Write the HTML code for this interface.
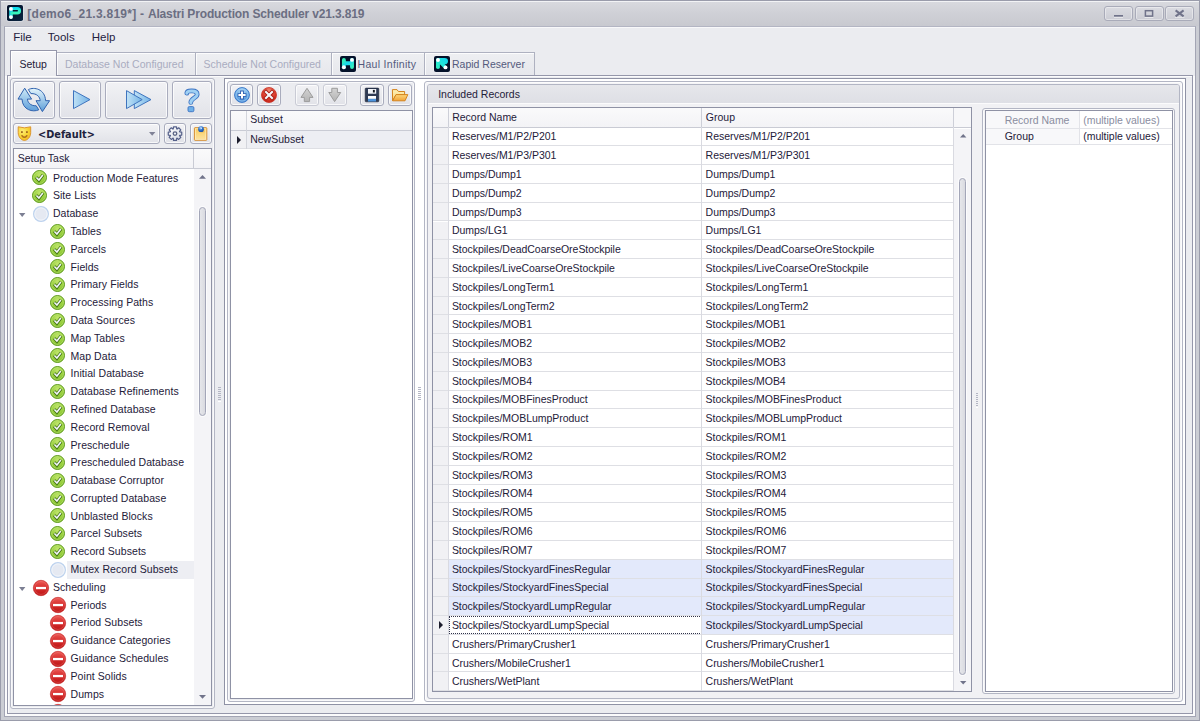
<!DOCTYPE html>
<html lang="en"><head><meta charset="utf-8"><title>Alastri Production Scheduler</title>
<style>
*{box-sizing:border-box;margin:0;padding:0}
html,body{width:1200px;height:721px;overflow:hidden;background:#ebecf0}
body{font-family:"Liberation Sans",sans-serif;font-size:10.5px;color:#1e2039;position:relative;-webkit-font-smoothing:antialiased}
.a{position:absolute}
.t{position:absolute;white-space:pre;line-height:1}
svg{position:absolute;overflow:visible}
.btn{position:absolute;border:1px solid #a9acbd;border-radius:3px;background:linear-gradient(#f2f2f5,#eaebef 45%,#e1e2e8);box-shadow:inset 0 0 0 1px rgba(255,255,255,.75)}
.btn.dis{border-color:#c9cbd5}
.grp{position:absolute;border:1px solid #b3b6c4;border-radius:3px;background:#ebecf0;box-shadow:inset 0 0 0 1px rgba(255,255,255,.7)}
.grid{position:absolute;border:1px solid #8f92a5;background:#fff}
.hdr{position:absolute;background:linear-gradient(#fafafb,#f3f3f6);border-bottom:1px solid #c9cbd4}
.row{position:absolute;left:0;border-bottom:1px solid #dedfe4}
.tr{position:absolute;left:0;height:17.79px;line-height:17.79px;white-space:pre}
.tab{position:absolute;top:52.3px;height:22.7px;border:1px solid #aeb1c0;border-bottom:none;background:linear-gradient(#eeeff2,#e6e7ec);box-shadow:inset 1px 1px 0 rgba(255,255,255,.8)}
</style></head>
<body>
<div class="a" style="left:0;top:0;width:1200px;height:721px;background:#cbcdd4;border:1px solid #9a9cab"></div>
<div class="a" style="left:1px;top:1px;width:1198px;height:25px;background:linear-gradient(#d9dadf,#d0d1d7 45%,#c8c9d0)"></div>
<div class="a" style="left:1px;top:1px;width:1198px;height:1px;background:#f2f3f5"></div>
<div class="a" style="left:4px;top:26px;width:1192px;height:691px;background:#ebecf0;border:1px solid #a3a5b4;border-top-color:#b3b5c3"></div>
<div class="a" style="left:5px;top:27px;width:1190px;height:1px;background:#f8f8fa"></div>
<svg style="left:7px;top:5px" width="16" height="16" viewBox="0 0 16 16"><defs><linearGradient id="g1" x1="0" y1="0" x2="0.3" y2="1"><stop offset="0" stop-color="#10dcf4"/><stop offset="1" stop-color="#38f6bc"/></linearGradient>
<linearGradient id="g1b" x1="0" y1="0" x2="1" y2="1"><stop offset="0" stop-color="#030e26"/><stop offset="1" stop-color="#0b2542"/></linearGradient></defs>
<rect x="-0.6" y="-0.6" width="17.2" height="17.2" rx="2.2" fill="#eef0f5" opacity=".75"/>
<rect width="16" height="16" rx="1.8" fill="url(#g1b)"/>
<path d="M4 3.9V12.1" stroke="#20d8e4" stroke-width="3.6" stroke-linecap="round" fill="none"/>
<path d="M4 3.5H10.3a2.25 2.25 0 0 1 0 4.5H5" stroke="url(#g1)" stroke-width="3" stroke-linecap="round" fill="none"/>
<circle cx="3.95" cy="3.9" r="1.95" fill="#fff"/><circle cx="3.95" cy="12.1" r="1.95" fill="#fff"/></svg>
<div class="t" style="left:27.3px;top:7.84px;font-size:12px;font-weight:bold;color:#6b6e82"><span style="letter-spacing:.26px">[demo6_21.3.819*] - </span><span style="letter-spacing:-.15px">Alastri Production Scheduler v21.3.819</span></div>
<div class="a" style="left:1104px;top:6px;width:29px;height:15px;border:1px solid #a9abb9;border-radius:3px;background:linear-gradient(#dadbe1,#cbccd4);box-shadow:inset 0 0 0 1px rgba(255,255,255,.4)"></div>
<div class="a" style="left:1135px;top:6px;width:29px;height:15px;border:1px solid #a9abb9;border-radius:3px;background:linear-gradient(#dadbe1,#cbccd4);box-shadow:inset 0 0 0 1px rgba(255,255,255,.4)"></div>
<div class="a" style="left:1165px;top:6px;width:29px;height:15px;border:1px solid #a9abb9;border-radius:3px;background:linear-gradient(#dadbe1,#cbccd4);box-shadow:inset 0 0 0 1px rgba(255,255,255,.4)"></div>
<svg style="left:0;top:0" width="1200" height="26" viewBox="0 0 1200 26"><rect x="1114" y="15" width="9" height="1.7" fill="#70738a"/><rect x="1114" y="16.9" width="9" height="0.9" fill="#fff" opacity=".6"/>
<rect x="1145.4" y="10.7" width="7.2" height="5.4" fill="none" stroke="#70738a" stroke-width="1.5"/><rect x="1144.6" y="17" width="8.8" height="0.9" fill="#fff" opacity=".6"/>
<path d="M1175.6 10.4L1183.6 16.4M1183.6 10.4L1175.6 16.4" stroke="#70738a" stroke-width="2" fill="none"/><rect x="1175" y="17" width="9.4" height="0.9" fill="#fff" opacity=".5"/></svg>
<div class="t" style="left:13.2px;top:32.27px;font-size:11.5px;color:#1f2140">File</div>
<div class="t" style="left:47.8px;top:32.27px;font-size:11.5px;color:#1f2140">Tools</div>
<div class="t" style="left:91.8px;top:32.27px;font-size:11.5px;color:#1f2140">Help</div>
<div class="a" style="left:7px;top:75px;width:1186px;height:639px;border:1px solid #9597aa;background:#ebecf0;box-shadow:inset 1px 1px 0 #fbfbfc"></div>
<div class="a" style="left:5px;top:76px;width:2px;height:640px;background:#fbfbfc"></div>
<div class="a" style="left:1193px;top:76px;width:2px;height:640px;background:#fbfbfc"></div>
<div class="a" style="left:5px;top:714px;width:1190px;height:2px;background:#fbfbfc"></div>
<div class="tab" style="left:56px;width:139.5px"></div>
<div class="t" style="left:65px;top:59.11px;color:#a9acbf">Database Not Configured</div>
<div class="tab" style="left:195px;width:136.5px"></div>
<div class="t" style="left:203.6px;top:59.11px;color:#a9acbf">Schedule Not Configured</div>
<div class="tab" style="left:331px;width:94.5px"></div>
<div class="t" style="left:357.6px;top:59.11px;color:#545a7c;letter-spacing:.3px">Haul Infinity</div>
<div class="tab" style="left:424px;width:111px"></div>
<div class="t" style="left:452px;top:59.11px;color:#545a7c">Rapid Reserver</div>
<svg style="left:339.5px;top:56.3px" width="16" height="16" viewBox="0 0 16 16"><defs><linearGradient id="g2" x1="0" y1="0" x2="1" y2="1"><stop offset="0" stop-color="#34f2b6"/><stop offset=".45" stop-color="#16d8f2"/><stop offset="1" stop-color="#36f0bc"/></linearGradient></defs>
<rect x="-0.6" y="-0.6" width="17.2" height="17.2" rx="2.4" fill="#f4f5f8" opacity=".7"/>
<rect width="16" height="16" rx="2" fill="#04112a"/>
<path d="M3.9 3.9V11.3M12 3.9V11.1M3.9 7.3H12" stroke="url(#g2)" stroke-width="3.9" stroke-linecap="round" fill="none"/>
<circle cx="12" cy="3.9" r="1.9" fill="#fff"/><circle cx="3.85" cy="11.3" r="1.95" fill="#fff"/></svg>
<svg style="left:433.7px;top:56.3px" width="16" height="16" viewBox="0 0 16 16"><defs><linearGradient id="g3" x1="1" y1="0" x2="0" y2="1"><stop offset="0" stop-color="#0fd4f2"/><stop offset=".55" stop-color="#22e6d8"/><stop offset="1" stop-color="#36f4bc"/></linearGradient></defs>
<rect x="-0.6" y="-0.6" width="17.2" height="17.2" rx="2.4" fill="#f4f5f8" opacity=".7"/>
<rect width="16" height="16" rx="2" fill="#04112a"/>
<path d="M2 3.6Q2 2 3.6 2H10.5Q14 2 14 5.2Q14 8.3 10.6 8.3L12.8 10.6L10.4 12.8L5.9 8.3V11.6Q5.9 13 4 13Q2 13 2 11.6Z" fill="url(#g3)"/>
<circle cx="4" cy="4" r="1.95" fill="#fff"/><circle cx="11.5" cy="11.4" r="1.95" fill="#fff"/></svg>
<div class="a" style="left:10px;top:50.2px;width:47.3px;height:26.3px;border:1px solid #9597aa;border-bottom:none;background:linear-gradient(#f6f6f8,#ebecf0);box-shadow:inset 1px 1px 0 #fff"></div>
<div class="a" style="left:8px;top:75px;width:3px;height:1px;background:#9597aa"></div>
<div class="t" style="left:19.4px;top:59.11px;">Setup</div>
<div class="grp" style="left:10px;top:78px;width:205px;height:631px"></div>
<div class="btn" style="left:13.1px;top:81px;width:41.8px;height:38px"></div>
<div class="btn" style="left:59.1px;top:81px;width:41.6px;height:38px"></div>
<div class="btn" style="left:105.2px;top:81px;width:62.7px;height:38px"></div>
<div class="btn" style="left:172px;top:81px;width:40.1px;height:38px"></div>
<svg style="left:14px;top:84px" width="40" height="32" viewBox="0 0 40 32"><defs><linearGradient id="g4" x1="0" y1="0" x2="0" y2="1"><stop offset="0" stop-color="#cfeaf8"/><stop offset="1" stop-color="#5f9fda"/></linearGradient><linearGradient id="g5" x1="0" y1="0" x2="0" y2="1"><stop offset="0" stop-color="#e4f5fc"/><stop offset="1" stop-color="#5c9ed8"/></linearGradient></defs>
<path d="M10.7 4.2L17.6 15.1H13.4C13.7 18.2 16.2 22 22.2 21.8L24.8 25.8C19 28.6 8.4 26 8 15.1H4Z" fill="url(#g4)" stroke="#2f62ae" stroke-width="1" stroke-linejoin="round"/>
<path d="M28.4 27.6L22 16.7H26.2C26 13 23 9.3 16.9 9.6L14.4 5.6C20 2.6 31 5 31.6 16.7H35.6Z" fill="url(#g5)" stroke="#2f62ae" stroke-width="1" stroke-linejoin="round"/></svg>
<svg style="left:72.7px;top:89.8px" width="18" height="20" viewBox="0 0 18 20"><defs><linearGradient id="g6" x1="0" y1="0" x2="1" y2="0"><stop offset="0" stop-color="#bfe1f5"/><stop offset="1" stop-color="#72b2e6"/></linearGradient></defs>
<path d="M0.5 0.6L17 9.6L0.5 18.6Z" fill="url(#g6)" stroke="#3f74be" stroke-width="1" stroke-linejoin="round"/></svg>
<svg style="left:125.6px;top:89.7px" width="26" height="20" viewBox="0 0 26 20"><defs><linearGradient id="g7" x1="0" y1="0" x2="1" y2="0"><stop offset="0" stop-color="#c2e3f6"/><stop offset="1" stop-color="#74b4e7"/></linearGradient></defs>
<path d="M8.3 0.6L25 9.6L8.3 18.6Z" fill="url(#g7)" stroke="#3f74be" stroke-width="1" stroke-linejoin="round"/>
<path d="M0.5 0.6L16.2 9.6L0.5 18.6Z" fill="url(#g7)" stroke="#3f74be" stroke-width="1" stroke-linejoin="round"/></svg>
<svg style="left:176px;top:84px" width="32" height="32" viewBox="0 0 32 32"><defs><linearGradient id="g8" x1="0" y1="0" x2="0" y2="1"><stop offset="0" stop-color="#bfe4f9"/><stop offset="1" stop-color="#69ade6"/></linearGradient></defs>
<path d="M10.8 9.2C11 6.6 13.6 6.9 16 6.9C19.5 6.9 21.2 8.4 21.2 10.4C21.2 13.6 14.8 14.4 14.8 18.4" fill="none" stroke="#3b72c2" stroke-width="4.7" stroke-linecap="round"/>
<path d="M10.8 9.2C11 6.6 13.6 6.9 16 6.9C19.5 6.9 21.2 8.4 21.2 10.4C21.2 13.6 14.8 14.4 14.8 18.4" fill="none" stroke="#9fd0f3" stroke-width="3" stroke-linecap="round"/>
<rect x="12" y="22.6" width="5.9" height="5.1" rx="1.3" fill="#6fb0e8" stroke="#3b72c2" stroke-width=".9"/></svg>
<div class="btn" style="left:13px;top:123px;width:147px;height:21px"></div>
<svg style="left:14px;top:122px" width="24" height="24" viewBox="0 0 24 24"><defs><radialGradient id="g9" cx=".35" cy=".3" r=".8"><stop offset="0" stop-color="#fdec78"/><stop offset=".6" stop-color="#f8d22e"/><stop offset="1" stop-color="#f0b028"/></radialGradient></defs>
<path d="M4.2 4.8Q10.4 6.9 16.7 4.8V10.6C16.7 15 13.6 18.2 10.45 18.5C7.3 18.2 4.2 15 4.2 10.6Z" fill="url(#g9)" stroke="#dc962e" stroke-width="1"/>
<rect x="7" y="9.2" width="1.8" height="1.8" fill="#a46c1e"/><rect x="12" y="9.2" width="1.8" height="1.8" fill="#a46c1e"/>
<path d="M8 13.7Q10.4 17 12.8 13.7" fill="none" stroke="#b0701e" stroke-width="1.5" stroke-linecap="round"/></svg>
<div class="t" style="left:38px;top:129.75px;font-size:9.75px;font-family:'DejaVu Sans','Liberation Sans',sans-serif;font-weight:bold;color:#20223c">&lt;Default&gt;</div>
<svg style="left:148.7px;top:131.7px" width="7" height="4"><path d="M0 0H6.4L3.2 3.8Z" fill="#7f8296"/></svg>
<div class="btn" style="left:164px;top:123px;width:22px;height:21px"></div>
<div class="btn" style="left:190px;top:123px;width:22px;height:21px"></div>
<svg style="left:162px;top:121px" width="26" height="26" viewBox="0 0 26 26"><defs><linearGradient id="g10" x1="0" y1="0" x2="1" y2="1"><stop offset="0" stop-color="#ffffff"/><stop offset="1" stop-color="#d3d8e2"/></linearGradient></defs>
<path d="M19.73 11.09L19.73 14.11L17.70 14.31L17.53 14.71L18.83 16.30L16.70 18.43L15.11 17.13L14.71 17.30L14.51 19.33L11.49 19.33L11.29 17.30L10.89 17.13L9.30 18.43L7.17 16.30L8.47 14.71L8.30 14.31L6.27 14.11L6.27 11.09L8.30 10.89L8.47 10.49L7.17 8.90L9.30 6.77L10.89 8.07L11.29 7.90L11.49 5.87L14.51 5.87L14.71 7.90L15.11 8.07L16.70 6.77L18.83 8.90L17.53 10.49L17.70 10.89Z" fill="url(#g10)" stroke="#55608a" stroke-width="1.2" stroke-linejoin="round"/>
<circle cx="13.0" cy="12.599999999999994" r="1.8" fill="#eef0f5" stroke="#5a6484" stroke-width="1.3"/></svg>
<svg style="left:162px;top:121px" width="52" height="26" viewBox="0 0 52 26"><defs><linearGradient id="g11" x1="0" y1="0" x2="0" y2="1"><stop offset="0" stop-color="#f9cb5e"/><stop offset="1" stop-color="#fce4a2"/></linearGradient>
<radialGradient id="g12" cx=".4" cy=".3" r=".7"><stop offset="0" stop-color="#9fcaf5"/><stop offset=".5" stop-color="#2f74cf"/><stop offset="1" stop-color="#1a4fa6"/></radialGradient></defs>
<rect x="32.4" y="6.7" width="12.4" height="12.6" rx=".6" fill="url(#g11)" stroke="#d68e34" stroke-width="1"/>
<rect x="33.4" y="7.7" width="10.4" height="10.6" fill="none" stroke="#fff3cc" stroke-width=".7" opacity=".8"/>
<ellipse cx="40" cy="10.6" rx="2.6" ry="1" fill="#c8902e" opacity=".35"/>
<circle cx="39" cy="8.2" r="2.85" fill="url(#g12)"/><path d="M38.4 6.6L40.4 6.8L39.2 8.2Z" fill="#fff" opacity=".9"/></svg>
<div class="grid" style="left:13px;top:148px;width:199px;height:558px;overflow:hidden">
<div class="hdr" style="left:0;top:0;width:197px;height:19.5px"></div>
<div class="a" style="left:178.6px;top:0;width:1px;height:19px;background:#c9cbd4"></div>
<div class="t" style="left:3.7px;top:4.11px;">Setup Task</div>
<div class="a" style="left:179.6px;top:19.5px;width:17.4px;height:537px;background:#f4f4f7"></div>
<svg style="left:185.3px;top:26.2px" width="8" height="5"><path d="M0 3.8H7L3.5 0Z" fill="#70738a"/></svg>
<svg style="left:185.3px;top:545.6px" width="8" height="5"><path d="M0 0H7L3.5 3.8Z" fill="#70738a"/></svg>
<div class="a" style="left:185px;top:58.3px;width:7px;height:209px;border:1px solid #a3a6b8;border-radius:3.6px;background:linear-gradient(90deg,#e6e7eb,#d9dae0);box-shadow:0 0 0 1px rgba(255,255,255,.7)"></div>
<svg style="left:18.45px;top:21.39px" width="15" height="15" viewBox="0 0 15 15"><defs><radialGradient id="g13" cx=".5" cy=".3" r=".75"><stop offset="0" stop-color="#bfe56c"/><stop offset=".6" stop-color="#97cf3c"/><stop offset="1" stop-color="#7ab828"/></radialGradient></defs>
<circle cx="7.5" cy="7.5" r="7" fill="url(#g13)" stroke="#609c1e" stroke-width="1"/>
<circle cx="7.5" cy="7.5" r="5.9" fill="none" stroke="#c4e880" stroke-width=".7" opacity=".7"/>
<path d="M4.2 7.3L6.9 10.3L11 4.9" fill="none" stroke="#417212" stroke-width="3.2" stroke-linejoin="miter"/>
<path d="M4.4 7.5L6.9 10.1L10.8 5.1" fill="none" stroke="#f2f5fa" stroke-width="1.6"/></svg>
<div class="t" style="left:38.9px;top:24.11px;letter-spacing:.07px">Production Mode Features</div>
<svg style="left:18.45px;top:39.18px" width="15" height="15" viewBox="0 0 15 15"><defs><radialGradient id="g14" cx=".5" cy=".3" r=".75"><stop offset="0" stop-color="#bfe56c"/><stop offset=".6" stop-color="#97cf3c"/><stop offset="1" stop-color="#7ab828"/></radialGradient></defs>
<circle cx="7.5" cy="7.5" r="7" fill="url(#g14)" stroke="#609c1e" stroke-width="1"/>
<circle cx="7.5" cy="7.5" r="5.9" fill="none" stroke="#c4e880" stroke-width=".7" opacity=".7"/>
<path d="M4.2 7.3L6.9 10.3L11 4.9" fill="none" stroke="#417212" stroke-width="3.2" stroke-linejoin="miter"/>
<path d="M4.4 7.5L6.9 10.1L10.8 5.1" fill="none" stroke="#f2f5fa" stroke-width="1.6"/></svg>
<div class="t" style="left:38.9px;top:41.11px;letter-spacing:.07px">Site Lists</div>
<svg style="left:5.2px;top:64.28px" width="7" height="4"><path d="M0 0H6.4L3.2 3.9Z" fill="#7c7f93"/></svg>
<svg style="left:19.00px;top:56.97px" width="16" height="16" viewBox="0 0 16 16"><circle cx="8" cy="8" r="7.4" fill="#e5e9f2" stroke="#bcd2ee" stroke-width="1.2"/>
<circle cx="8" cy="8" r="6.1" fill="none" stroke="#f2f5fa" stroke-width=".9"/></svg>
<div class="t" style="left:38.9px;top:59.11px;letter-spacing:.07px">Database</div>
<svg style="left:36.05px;top:74.76px" width="15" height="15" viewBox="0 0 15 15"><defs><radialGradient id="g15" cx=".5" cy=".3" r=".75"><stop offset="0" stop-color="#bfe56c"/><stop offset=".6" stop-color="#97cf3c"/><stop offset="1" stop-color="#7ab828"/></radialGradient></defs>
<circle cx="7.5" cy="7.5" r="7" fill="url(#g15)" stroke="#609c1e" stroke-width="1"/>
<circle cx="7.5" cy="7.5" r="5.9" fill="none" stroke="#c4e880" stroke-width=".7" opacity=".7"/>
<path d="M4.2 7.3L6.9 10.3L11 4.9" fill="none" stroke="#417212" stroke-width="3.2" stroke-linejoin="miter"/>
<path d="M4.4 7.5L6.9 10.1L10.8 5.1" fill="none" stroke="#f2f5fa" stroke-width="1.6"/></svg>
<div class="t" style="left:56.5px;top:77.11px;letter-spacing:.07px">Tables</div>
<svg style="left:36.05px;top:92.55px" width="15" height="15" viewBox="0 0 15 15"><defs><radialGradient id="g16" cx=".5" cy=".3" r=".75"><stop offset="0" stop-color="#bfe56c"/><stop offset=".6" stop-color="#97cf3c"/><stop offset="1" stop-color="#7ab828"/></radialGradient></defs>
<circle cx="7.5" cy="7.5" r="7" fill="url(#g16)" stroke="#609c1e" stroke-width="1"/>
<circle cx="7.5" cy="7.5" r="5.9" fill="none" stroke="#c4e880" stroke-width=".7" opacity=".7"/>
<path d="M4.2 7.3L6.9 10.3L11 4.9" fill="none" stroke="#417212" stroke-width="3.2" stroke-linejoin="miter"/>
<path d="M4.4 7.5L6.9 10.1L10.8 5.1" fill="none" stroke="#f2f5fa" stroke-width="1.6"/></svg>
<div class="t" style="left:56.5px;top:95.11px;letter-spacing:.07px">Parcels</div>
<svg style="left:36.05px;top:110.34px" width="15" height="15" viewBox="0 0 15 15"><defs><radialGradient id="g17" cx=".5" cy=".3" r=".75"><stop offset="0" stop-color="#bfe56c"/><stop offset=".6" stop-color="#97cf3c"/><stop offset="1" stop-color="#7ab828"/></radialGradient></defs>
<circle cx="7.5" cy="7.5" r="7" fill="url(#g17)" stroke="#609c1e" stroke-width="1"/>
<circle cx="7.5" cy="7.5" r="5.9" fill="none" stroke="#c4e880" stroke-width=".7" opacity=".7"/>
<path d="M4.2 7.3L6.9 10.3L11 4.9" fill="none" stroke="#417212" stroke-width="3.2" stroke-linejoin="miter"/>
<path d="M4.4 7.5L6.9 10.1L10.8 5.1" fill="none" stroke="#f2f5fa" stroke-width="1.6"/></svg>
<div class="t" style="left:56.5px;top:113.11px;letter-spacing:.07px">Fields</div>
<svg style="left:36.05px;top:128.14px" width="15" height="15" viewBox="0 0 15 15"><defs><radialGradient id="g18" cx=".5" cy=".3" r=".75"><stop offset="0" stop-color="#bfe56c"/><stop offset=".6" stop-color="#97cf3c"/><stop offset="1" stop-color="#7ab828"/></radialGradient></defs>
<circle cx="7.5" cy="7.5" r="7" fill="url(#g18)" stroke="#609c1e" stroke-width="1"/>
<circle cx="7.5" cy="7.5" r="5.9" fill="none" stroke="#c4e880" stroke-width=".7" opacity=".7"/>
<path d="M4.2 7.3L6.9 10.3L11 4.9" fill="none" stroke="#417212" stroke-width="3.2" stroke-linejoin="miter"/>
<path d="M4.4 7.5L6.9 10.1L10.8 5.1" fill="none" stroke="#f2f5fa" stroke-width="1.6"/></svg>
<div class="t" style="left:56.5px;top:130.11px;letter-spacing:.07px">Primary Fields</div>
<svg style="left:36.05px;top:145.93px" width="15" height="15" viewBox="0 0 15 15"><defs><radialGradient id="g19" cx=".5" cy=".3" r=".75"><stop offset="0" stop-color="#bfe56c"/><stop offset=".6" stop-color="#97cf3c"/><stop offset="1" stop-color="#7ab828"/></radialGradient></defs>
<circle cx="7.5" cy="7.5" r="7" fill="url(#g19)" stroke="#609c1e" stroke-width="1"/>
<circle cx="7.5" cy="7.5" r="5.9" fill="none" stroke="#c4e880" stroke-width=".7" opacity=".7"/>
<path d="M4.2 7.3L6.9 10.3L11 4.9" fill="none" stroke="#417212" stroke-width="3.2" stroke-linejoin="miter"/>
<path d="M4.4 7.5L6.9 10.1L10.8 5.1" fill="none" stroke="#f2f5fa" stroke-width="1.6"/></svg>
<div class="t" style="left:56.5px;top:148.11px;letter-spacing:.07px">Processing Paths</div>
<svg style="left:36.05px;top:163.72px" width="15" height="15" viewBox="0 0 15 15"><defs><radialGradient id="g20" cx=".5" cy=".3" r=".75"><stop offset="0" stop-color="#bfe56c"/><stop offset=".6" stop-color="#97cf3c"/><stop offset="1" stop-color="#7ab828"/></radialGradient></defs>
<circle cx="7.5" cy="7.5" r="7" fill="url(#g20)" stroke="#609c1e" stroke-width="1"/>
<circle cx="7.5" cy="7.5" r="5.9" fill="none" stroke="#c4e880" stroke-width=".7" opacity=".7"/>
<path d="M4.2 7.3L6.9 10.3L11 4.9" fill="none" stroke="#417212" stroke-width="3.2" stroke-linejoin="miter"/>
<path d="M4.4 7.5L6.9 10.1L10.8 5.1" fill="none" stroke="#f2f5fa" stroke-width="1.6"/></svg>
<div class="t" style="left:56.5px;top:166.11px;letter-spacing:.07px">Data Sources</div>
<svg style="left:36.05px;top:181.50px" width="15" height="15" viewBox="0 0 15 15"><defs><radialGradient id="g21" cx=".5" cy=".3" r=".75"><stop offset="0" stop-color="#bfe56c"/><stop offset=".6" stop-color="#97cf3c"/><stop offset="1" stop-color="#7ab828"/></radialGradient></defs>
<circle cx="7.5" cy="7.5" r="7" fill="url(#g21)" stroke="#609c1e" stroke-width="1"/>
<circle cx="7.5" cy="7.5" r="5.9" fill="none" stroke="#c4e880" stroke-width=".7" opacity=".7"/>
<path d="M4.2 7.3L6.9 10.3L11 4.9" fill="none" stroke="#417212" stroke-width="3.2" stroke-linejoin="miter"/>
<path d="M4.4 7.5L6.9 10.1L10.8 5.1" fill="none" stroke="#f2f5fa" stroke-width="1.6"/></svg>
<div class="t" style="left:56.5px;top:184.11px;letter-spacing:.07px">Map Tables</div>
<svg style="left:36.05px;top:199.29px" width="15" height="15" viewBox="0 0 15 15"><defs><radialGradient id="g22" cx=".5" cy=".3" r=".75"><stop offset="0" stop-color="#bfe56c"/><stop offset=".6" stop-color="#97cf3c"/><stop offset="1" stop-color="#7ab828"/></radialGradient></defs>
<circle cx="7.5" cy="7.5" r="7" fill="url(#g22)" stroke="#609c1e" stroke-width="1"/>
<circle cx="7.5" cy="7.5" r="5.9" fill="none" stroke="#c4e880" stroke-width=".7" opacity=".7"/>
<path d="M4.2 7.3L6.9 10.3L11 4.9" fill="none" stroke="#417212" stroke-width="3.2" stroke-linejoin="miter"/>
<path d="M4.4 7.5L6.9 10.1L10.8 5.1" fill="none" stroke="#f2f5fa" stroke-width="1.6"/></svg>
<div class="t" style="left:56.5px;top:202.11px;letter-spacing:.07px">Map Data</div>
<svg style="left:36.05px;top:217.09px" width="15" height="15" viewBox="0 0 15 15"><defs><radialGradient id="g23" cx=".5" cy=".3" r=".75"><stop offset="0" stop-color="#bfe56c"/><stop offset=".6" stop-color="#97cf3c"/><stop offset="1" stop-color="#7ab828"/></radialGradient></defs>
<circle cx="7.5" cy="7.5" r="7" fill="url(#g23)" stroke="#609c1e" stroke-width="1"/>
<circle cx="7.5" cy="7.5" r="5.9" fill="none" stroke="#c4e880" stroke-width=".7" opacity=".7"/>
<path d="M4.2 7.3L6.9 10.3L11 4.9" fill="none" stroke="#417212" stroke-width="3.2" stroke-linejoin="miter"/>
<path d="M4.4 7.5L6.9 10.1L10.8 5.1" fill="none" stroke="#f2f5fa" stroke-width="1.6"/></svg>
<div class="t" style="left:56.5px;top:219.11px;letter-spacing:.07px">Initial Database</div>
<svg style="left:36.05px;top:234.88px" width="15" height="15" viewBox="0 0 15 15"><defs><radialGradient id="g24" cx=".5" cy=".3" r=".75"><stop offset="0" stop-color="#bfe56c"/><stop offset=".6" stop-color="#97cf3c"/><stop offset="1" stop-color="#7ab828"/></radialGradient></defs>
<circle cx="7.5" cy="7.5" r="7" fill="url(#g24)" stroke="#609c1e" stroke-width="1"/>
<circle cx="7.5" cy="7.5" r="5.9" fill="none" stroke="#c4e880" stroke-width=".7" opacity=".7"/>
<path d="M4.2 7.3L6.9 10.3L11 4.9" fill="none" stroke="#417212" stroke-width="3.2" stroke-linejoin="miter"/>
<path d="M4.4 7.5L6.9 10.1L10.8 5.1" fill="none" stroke="#f2f5fa" stroke-width="1.6"/></svg>
<div class="t" style="left:56.5px;top:237.11px;letter-spacing:.07px">Database Refinements</div>
<svg style="left:36.05px;top:252.66px" width="15" height="15" viewBox="0 0 15 15"><defs><radialGradient id="g25" cx=".5" cy=".3" r=".75"><stop offset="0" stop-color="#bfe56c"/><stop offset=".6" stop-color="#97cf3c"/><stop offset="1" stop-color="#7ab828"/></radialGradient></defs>
<circle cx="7.5" cy="7.5" r="7" fill="url(#g25)" stroke="#609c1e" stroke-width="1"/>
<circle cx="7.5" cy="7.5" r="5.9" fill="none" stroke="#c4e880" stroke-width=".7" opacity=".7"/>
<path d="M4.2 7.3L6.9 10.3L11 4.9" fill="none" stroke="#417212" stroke-width="3.2" stroke-linejoin="miter"/>
<path d="M4.4 7.5L6.9 10.1L10.8 5.1" fill="none" stroke="#f2f5fa" stroke-width="1.6"/></svg>
<div class="t" style="left:56.5px;top:255.11px;letter-spacing:.07px">Refined Database</div>
<svg style="left:36.05px;top:270.45px" width="15" height="15" viewBox="0 0 15 15"><defs><radialGradient id="g26" cx=".5" cy=".3" r=".75"><stop offset="0" stop-color="#bfe56c"/><stop offset=".6" stop-color="#97cf3c"/><stop offset="1" stop-color="#7ab828"/></radialGradient></defs>
<circle cx="7.5" cy="7.5" r="7" fill="url(#g26)" stroke="#609c1e" stroke-width="1"/>
<circle cx="7.5" cy="7.5" r="5.9" fill="none" stroke="#c4e880" stroke-width=".7" opacity=".7"/>
<path d="M4.2 7.3L6.9 10.3L11 4.9" fill="none" stroke="#417212" stroke-width="3.2" stroke-linejoin="miter"/>
<path d="M4.4 7.5L6.9 10.1L10.8 5.1" fill="none" stroke="#f2f5fa" stroke-width="1.6"/></svg>
<div class="t" style="left:56.5px;top:273.11px;letter-spacing:.07px">Record Removal</div>
<svg style="left:36.05px;top:288.24px" width="15" height="15" viewBox="0 0 15 15"><defs><radialGradient id="g27" cx=".5" cy=".3" r=".75"><stop offset="0" stop-color="#bfe56c"/><stop offset=".6" stop-color="#97cf3c"/><stop offset="1" stop-color="#7ab828"/></radialGradient></defs>
<circle cx="7.5" cy="7.5" r="7" fill="url(#g27)" stroke="#609c1e" stroke-width="1"/>
<circle cx="7.5" cy="7.5" r="5.9" fill="none" stroke="#c4e880" stroke-width=".7" opacity=".7"/>
<path d="M4.2 7.3L6.9 10.3L11 4.9" fill="none" stroke="#417212" stroke-width="3.2" stroke-linejoin="miter"/>
<path d="M4.4 7.5L6.9 10.1L10.8 5.1" fill="none" stroke="#f2f5fa" stroke-width="1.6"/></svg>
<div class="t" style="left:56.5px;top:291.11px;letter-spacing:.07px">Preschedule</div>
<svg style="left:36.05px;top:306.03px" width="15" height="15" viewBox="0 0 15 15"><defs><radialGradient id="g28" cx=".5" cy=".3" r=".75"><stop offset="0" stop-color="#bfe56c"/><stop offset=".6" stop-color="#97cf3c"/><stop offset="1" stop-color="#7ab828"/></radialGradient></defs>
<circle cx="7.5" cy="7.5" r="7" fill="url(#g28)" stroke="#609c1e" stroke-width="1"/>
<circle cx="7.5" cy="7.5" r="5.9" fill="none" stroke="#c4e880" stroke-width=".7" opacity=".7"/>
<path d="M4.2 7.3L6.9 10.3L11 4.9" fill="none" stroke="#417212" stroke-width="3.2" stroke-linejoin="miter"/>
<path d="M4.4 7.5L6.9 10.1L10.8 5.1" fill="none" stroke="#f2f5fa" stroke-width="1.6"/></svg>
<div class="t" style="left:56.5px;top:308.11px;letter-spacing:.07px">Prescheduled Database</div>
<svg style="left:36.05px;top:323.82px" width="15" height="15" viewBox="0 0 15 15"><defs><radialGradient id="g29" cx=".5" cy=".3" r=".75"><stop offset="0" stop-color="#bfe56c"/><stop offset=".6" stop-color="#97cf3c"/><stop offset="1" stop-color="#7ab828"/></radialGradient></defs>
<circle cx="7.5" cy="7.5" r="7" fill="url(#g29)" stroke="#609c1e" stroke-width="1"/>
<circle cx="7.5" cy="7.5" r="5.9" fill="none" stroke="#c4e880" stroke-width=".7" opacity=".7"/>
<path d="M4.2 7.3L6.9 10.3L11 4.9" fill="none" stroke="#417212" stroke-width="3.2" stroke-linejoin="miter"/>
<path d="M4.4 7.5L6.9 10.1L10.8 5.1" fill="none" stroke="#f2f5fa" stroke-width="1.6"/></svg>
<div class="t" style="left:56.5px;top:326.11px;letter-spacing:.07px">Database Corruptor</div>
<svg style="left:36.05px;top:341.61px" width="15" height="15" viewBox="0 0 15 15"><defs><radialGradient id="g30" cx=".5" cy=".3" r=".75"><stop offset="0" stop-color="#bfe56c"/><stop offset=".6" stop-color="#97cf3c"/><stop offset="1" stop-color="#7ab828"/></radialGradient></defs>
<circle cx="7.5" cy="7.5" r="7" fill="url(#g30)" stroke="#609c1e" stroke-width="1"/>
<circle cx="7.5" cy="7.5" r="5.9" fill="none" stroke="#c4e880" stroke-width=".7" opacity=".7"/>
<path d="M4.2 7.3L6.9 10.3L11 4.9" fill="none" stroke="#417212" stroke-width="3.2" stroke-linejoin="miter"/>
<path d="M4.4 7.5L6.9 10.1L10.8 5.1" fill="none" stroke="#f2f5fa" stroke-width="1.6"/></svg>
<div class="t" style="left:56.5px;top:344.11px;letter-spacing:.07px">Corrupted Database</div>
<svg style="left:36.05px;top:359.40px" width="15" height="15" viewBox="0 0 15 15"><defs><radialGradient id="g31" cx=".5" cy=".3" r=".75"><stop offset="0" stop-color="#bfe56c"/><stop offset=".6" stop-color="#97cf3c"/><stop offset="1" stop-color="#7ab828"/></radialGradient></defs>
<circle cx="7.5" cy="7.5" r="7" fill="url(#g31)" stroke="#609c1e" stroke-width="1"/>
<circle cx="7.5" cy="7.5" r="5.9" fill="none" stroke="#c4e880" stroke-width=".7" opacity=".7"/>
<path d="M4.2 7.3L6.9 10.3L11 4.9" fill="none" stroke="#417212" stroke-width="3.2" stroke-linejoin="miter"/>
<path d="M4.4 7.5L6.9 10.1L10.8 5.1" fill="none" stroke="#f2f5fa" stroke-width="1.6"/></svg>
<div class="t" style="left:56.5px;top:362.11px;letter-spacing:.07px">Unblasted Blocks</div>
<svg style="left:36.05px;top:377.19px" width="15" height="15" viewBox="0 0 15 15"><defs><radialGradient id="g32" cx=".5" cy=".3" r=".75"><stop offset="0" stop-color="#bfe56c"/><stop offset=".6" stop-color="#97cf3c"/><stop offset="1" stop-color="#7ab828"/></radialGradient></defs>
<circle cx="7.5" cy="7.5" r="7" fill="url(#g32)" stroke="#609c1e" stroke-width="1"/>
<circle cx="7.5" cy="7.5" r="5.9" fill="none" stroke="#c4e880" stroke-width=".7" opacity=".7"/>
<path d="M4.2 7.3L6.9 10.3L11 4.9" fill="none" stroke="#417212" stroke-width="3.2" stroke-linejoin="miter"/>
<path d="M4.4 7.5L6.9 10.1L10.8 5.1" fill="none" stroke="#f2f5fa" stroke-width="1.6"/></svg>
<div class="t" style="left:56.5px;top:379.11px;letter-spacing:.07px">Parcel Subsets</div>
<svg style="left:36.05px;top:394.98px" width="15" height="15" viewBox="0 0 15 15"><defs><radialGradient id="g33" cx=".5" cy=".3" r=".75"><stop offset="0" stop-color="#bfe56c"/><stop offset=".6" stop-color="#97cf3c"/><stop offset="1" stop-color="#7ab828"/></radialGradient></defs>
<circle cx="7.5" cy="7.5" r="7" fill="url(#g33)" stroke="#609c1e" stroke-width="1"/>
<circle cx="7.5" cy="7.5" r="5.9" fill="none" stroke="#c4e880" stroke-width=".7" opacity=".7"/>
<path d="M4.2 7.3L6.9 10.3L11 4.9" fill="none" stroke="#417212" stroke-width="3.2" stroke-linejoin="miter"/>
<path d="M4.4 7.5L6.9 10.1L10.8 5.1" fill="none" stroke="#f2f5fa" stroke-width="1.6"/></svg>
<div class="t" style="left:56.5px;top:397.11px;letter-spacing:.07px">Record Subsets</div>
<div class="a" style="left:52.7px;top:412.18px;width:127.6px;height:17.4px;background:#edeef3"></div>
<svg style="left:35.90px;top:412.77px" width="16" height="16" viewBox="0 0 16 16"><circle cx="8" cy="8" r="7.4" fill="#e5e9f2" stroke="#bcd2ee" stroke-width="1.2"/>
<circle cx="8" cy="8" r="6.1" fill="none" stroke="#f2f5fa" stroke-width=".9"/></svg>
<div class="t" style="left:56.5px;top:415.11px;letter-spacing:.07px">Mutex Record Subsets</div>
<svg style="left:5.2px;top:437.87px" width="7" height="4"><path d="M0 0H6.4L3.2 3.9Z" fill="#7c7f93"/></svg>
<svg style="left:19.00px;top:430.51px" width="16" height="16" viewBox="0 0 16 16"><defs><linearGradient id="g34" x1="0" y1="0" x2="0" y2="1"><stop offset="0" stop-color="#ec5a56"/><stop offset=".5" stop-color="#d62c2c"/><stop offset="1" stop-color="#bb1414"/></linearGradient></defs>
<circle cx="8" cy="8" r="7.7" fill="url(#g34)" stroke="#c22424" stroke-width=".6"/>
<circle cx="8" cy="8" r="6.4" fill="none" stroke="#f08c86" stroke-width=".6" opacity=".55"/>
<rect x="3" y="6.9" width="10" height="2.3" fill="#fff"/></svg>
<div class="t" style="left:38.9px;top:433.11px;letter-spacing:.07px">Scheduling</div>
<svg style="left:36.10px;top:448.30px" width="16" height="16" viewBox="0 0 16 16"><defs><linearGradient id="g35" x1="0" y1="0" x2="0" y2="1"><stop offset="0" stop-color="#ec5a56"/><stop offset=".5" stop-color="#d62c2c"/><stop offset="1" stop-color="#bb1414"/></linearGradient></defs>
<circle cx="8" cy="8" r="7.7" fill="url(#g35)" stroke="#c22424" stroke-width=".6"/>
<circle cx="8" cy="8" r="6.4" fill="none" stroke="#f08c86" stroke-width=".6" opacity=".55"/>
<rect x="3" y="6.9" width="10" height="2.3" fill="#fff"/></svg>
<div class="t" style="left:56.5px;top:451.11px;letter-spacing:.07px">Periods</div>
<svg style="left:36.10px;top:466.09px" width="16" height="16" viewBox="0 0 16 16"><defs><linearGradient id="g36" x1="0" y1="0" x2="0" y2="1"><stop offset="0" stop-color="#ec5a56"/><stop offset=".5" stop-color="#d62c2c"/><stop offset="1" stop-color="#bb1414"/></linearGradient></defs>
<circle cx="8" cy="8" r="7.7" fill="url(#g36)" stroke="#c22424" stroke-width=".6"/>
<circle cx="8" cy="8" r="6.4" fill="none" stroke="#f08c86" stroke-width=".6" opacity=".55"/>
<rect x="3" y="6.9" width="10" height="2.3" fill="#fff"/></svg>
<div class="t" style="left:56.5px;top:468.11px;letter-spacing:.07px">Period Subsets</div>
<svg style="left:36.10px;top:483.88px" width="16" height="16" viewBox="0 0 16 16"><defs><linearGradient id="g37" x1="0" y1="0" x2="0" y2="1"><stop offset="0" stop-color="#ec5a56"/><stop offset=".5" stop-color="#d62c2c"/><stop offset="1" stop-color="#bb1414"/></linearGradient></defs>
<circle cx="8" cy="8" r="7.7" fill="url(#g37)" stroke="#c22424" stroke-width=".6"/>
<circle cx="8" cy="8" r="6.4" fill="none" stroke="#f08c86" stroke-width=".6" opacity=".55"/>
<rect x="3" y="6.9" width="10" height="2.3" fill="#fff"/></svg>
<div class="t" style="left:56.5px;top:486.11px;letter-spacing:.07px">Guidance Categories</div>
<svg style="left:36.10px;top:501.67px" width="16" height="16" viewBox="0 0 16 16"><defs><linearGradient id="g38" x1="0" y1="0" x2="0" y2="1"><stop offset="0" stop-color="#ec5a56"/><stop offset=".5" stop-color="#d62c2c"/><stop offset="1" stop-color="#bb1414"/></linearGradient></defs>
<circle cx="8" cy="8" r="7.7" fill="url(#g38)" stroke="#c22424" stroke-width=".6"/>
<circle cx="8" cy="8" r="6.4" fill="none" stroke="#f08c86" stroke-width=".6" opacity=".55"/>
<rect x="3" y="6.9" width="10" height="2.3" fill="#fff"/></svg>
<div class="t" style="left:56.5px;top:504.11px;letter-spacing:.07px">Guidance Schedules</div>
<svg style="left:36.10px;top:519.47px" width="16" height="16" viewBox="0 0 16 16"><defs><linearGradient id="g39" x1="0" y1="0" x2="0" y2="1"><stop offset="0" stop-color="#ec5a56"/><stop offset=".5" stop-color="#d62c2c"/><stop offset="1" stop-color="#bb1414"/></linearGradient></defs>
<circle cx="8" cy="8" r="7.7" fill="url(#g39)" stroke="#c22424" stroke-width=".6"/>
<circle cx="8" cy="8" r="6.4" fill="none" stroke="#f08c86" stroke-width=".6" opacity=".55"/>
<rect x="3" y="6.9" width="10" height="2.3" fill="#fff"/></svg>
<div class="t" style="left:56.5px;top:522.11px;letter-spacing:.07px">Point Solids</div>
<svg style="left:36.10px;top:537.25px" width="16" height="16" viewBox="0 0 16 16"><defs><linearGradient id="g40" x1="0" y1="0" x2="0" y2="1"><stop offset="0" stop-color="#ec5a56"/><stop offset=".5" stop-color="#d62c2c"/><stop offset="1" stop-color="#bb1414"/></linearGradient></defs>
<circle cx="8" cy="8" r="7.7" fill="url(#g40)" stroke="#c22424" stroke-width=".6"/>
<circle cx="8" cy="8" r="6.4" fill="none" stroke="#f08c86" stroke-width=".6" opacity=".55"/>
<rect x="3" y="6.9" width="10" height="2.3" fill="#fff"/></svg>
<div class="t" style="left:56.5px;top:540.11px;letter-spacing:.07px">Dumps</div>
<svg style="left:36.10px;top:555.04px" width="16" height="16" viewBox="0 0 16 16"><defs><linearGradient id="g41" x1="0" y1="0" x2="0" y2="1"><stop offset="0" stop-color="#ec5a56"/><stop offset=".5" stop-color="#d62c2c"/><stop offset="1" stop-color="#bb1414"/></linearGradient></defs>
<circle cx="8" cy="8" r="7.7" fill="url(#g41)" stroke="#c22424" stroke-width=".6"/>
<circle cx="8" cy="8" r="6.4" fill="none" stroke="#f08c86" stroke-width=".6" opacity=".55"/>
<rect x="3" y="6.9" width="10" height="2.3" fill="#fff"/></svg>
</div>
<div class="a" style="left:218px;top:387.0px;width:2.6px;height:1px;background:#b4b6c4"></div><div class="a" style="left:218px;top:389.0px;width:2.6px;height:1px;background:#b4b6c4"></div><div class="a" style="left:218px;top:391.0px;width:2.6px;height:1px;background:#b4b6c4"></div><div class="a" style="left:218px;top:393.0px;width:2.6px;height:1px;background:#b4b6c4"></div><div class="a" style="left:218px;top:395.0px;width:2.6px;height:1px;background:#b4b6c4"></div><div class="a" style="left:218px;top:397.0px;width:2.6px;height:1px;background:#b4b6c4"></div><div class="a" style="left:218px;top:399.0px;width:2.6px;height:1px;background:#b4b6c4"></div><div class="a" style="left:218px;top:400.6px;width:2.6px;height:1px;background:#fff"></div>
<div class="a" style="left:224px;top:78px;width:962px;height:627px;border:1px solid #8f92a5;background:#fff"></div>
<div class="grp" style="left:227px;top:81px;width:188px;height:621px"></div>
<div class="btn" style="left:230px;top:84.2px;width:23.3px;height:21.5px"></div>
<div class="btn" style="left:257.4px;top:84.2px;width:23.3px;height:21.5px"></div>
<div class="btn dis" style="left:295.3px;top:84.2px;width:23.3px;height:21.5px"></div>
<div class="btn dis" style="left:322.9px;top:84.2px;width:23.8px;height:21.5px"></div>
<div class="btn" style="left:360.3px;top:84.2px;width:23.5px;height:21.5px"></div>
<div class="btn" style="left:388px;top:84.2px;width:24px;height:21.5px"></div>
<svg style="left:233.5px;top:86.7px" width="16" height="16" viewBox="0 0 16 16"><defs><radialGradient id="g42" cx=".5" cy=".25" r=".8"><stop offset="0" stop-color="#b4dcf7"/><stop offset=".55" stop-color="#66a8e4"/><stop offset="1" stop-color="#4888d6"/></radialGradient></defs>
<circle cx="8" cy="8" r="7.4" fill="url(#g42)" stroke="#3c7aca" stroke-width="1"/>
<circle cx="8" cy="8" r="6.1" fill="none" stroke="#a9d3f5" stroke-width=".8" opacity=".8"/>
<path d="M8 3.6V12.4M3.6 8H12.4" stroke="#2c5cae" stroke-width="3.7" fill="none"/>
<path d="M8 4.4V11.6M4.4 8H11.6" stroke="#fff" stroke-width="2" fill="none"/></svg>
<svg style="left:261.1px;top:86.7px" width="16" height="16" viewBox="0 0 16 16"><defs><radialGradient id="g43" cx=".5" cy=".25" r=".8"><stop offset="0" stop-color="#f4907a"/><stop offset=".55" stop-color="#dc3c2c"/><stop offset="1" stop-color="#c42418"/></radialGradient></defs>
<circle cx="8" cy="8" r="7.5" fill="url(#g43)" stroke="#c83024" stroke-width=".8"/>
<path d="M5 5L11 11M11 5L5 11" stroke="#a81c12" stroke-width="3.9" fill="none" stroke-linecap="square"/>
<path d="M5 5L11 11M11 5L5 11" stroke="#f4f7fb" stroke-width="2.1" fill="none" stroke-linecap="square"/></svg>
<svg style="left:294px;top:82px" width="26" height="26" viewBox="0 0 26 26"><defs><linearGradient id="g44" x1="0" y1="0" x2="0" y2="1"><stop offset="0" stop-color="#d3d3d3"/><stop offset="1" stop-color="#b3b3b3"/></linearGradient></defs>
<path d="M13 6.3L19 15.4H15.6V19.6H10.3V15.4H7Z" fill="url(#g44)" stroke="#9c9c9c" stroke-width="1" stroke-linejoin="round"/></svg>
<svg style="left:294px;top:82px" width="52" height="26" viewBox="0 0 52 26"><defs><linearGradient id="g45" x1="0" y1="0" x2="0" y2="1"><stop offset="0" stop-color="#d3d3d3"/><stop offset="1" stop-color="#b3b3b3"/></linearGradient></defs>
<path d="M37.8 6.3H43.4V10.5H46.7L40.6 19.6L34.8 10.5H37.8Z" fill="url(#g45)" stroke="#9c9c9c" stroke-width="1" stroke-linejoin="round"/></svg>
<svg style="left:358px;top:82px" width="28" height="26" viewBox="0 0 28 26"><rect x="7.2" y="6.1" width="13.6" height="13.7" rx=".8" fill="#2e3a54"/>
<rect x="7.2" y="6.1" width="13.6" height="13.7" rx=".8" fill="none" stroke="#1c2538" stroke-width=".6"/>
<rect x="10" y="7" width="8.2" height="4.7" fill="#f3f5f9"/>
<rect x="14.9" y="7.9" width="1.9" height="2.6" fill="#10151f"/>
<rect x="10" y="14" width="8" height="2.9" fill="#fbfcfd"/>
<rect x="10" y="16.9" width="8" height="2.6" fill="#4c93dc"/></svg>
<svg style="left:358px;top:82px" width="56" height="26" viewBox="0 0 56 26"><defs><linearGradient id="g46" x1="0" y1="0" x2="0" y2="1"><stop offset="0" stop-color="#fdd77c"/><stop offset="1" stop-color="#f0a236"/></linearGradient>
<linearGradient id="g47" x1="0" y1="0" x2="0" y2="1"><stop offset="0" stop-color="#fef0b4"/><stop offset="1" stop-color="#f9d680"/></linearGradient></defs>
<path d="M34.4 7.6H39L40.4 9.5H46.6V12.6H38.2L34.6 18.6Z" fill="url(#g47)" stroke="#d4841e" stroke-width="1" stroke-linejoin="round"/>
<path d="M38 12.6H49.8L47 18.8H34.6Z" fill="url(#g46)" stroke="#d4841e" stroke-width="1" stroke-linejoin="round"/></svg>
<div class="grid" style="left:230px;top:110px;width:182.5px;height:589px;overflow:hidden">
<div class="hdr" style="left:0;top:0;width:181px;height:19.5px"></div>
<div class="a" style="left:14.5px;top:0;width:1px;height:37.6px;background:#d3d5dc"></div>
<div class="t" style="left:19.2px;top:3.11px;">Subset</div>
<div class="a" style="left:0;top:19.5px;width:181px;height:18.6px;background:#edeef3;border-bottom:1px solid #dedfe4"></div>
<div class="a" style="left:0;top:19.5px;width:14.5px;height:17.6px;background:#f1f1f4"></div>
<div class="a" style="left:14.5px;top:0;width:1px;height:38px;background:#d3d5dc"></div>
<svg style="left:5.6px;top:24.6px" width="5" height="9"><path d="M0 0L4 4L0 8Z" fill="#1c1d2c"/></svg>
<div class="t" style="left:19.2px;top:23.11px;">NewSubset</div>
</div>
<div class="a" style="left:418px;top:387.0px;width:2.6px;height:1px;background:#b4b6c4"></div><div class="a" style="left:418px;top:389.0px;width:2.6px;height:1px;background:#b4b6c4"></div><div class="a" style="left:418px;top:391.0px;width:2.6px;height:1px;background:#b4b6c4"></div><div class="a" style="left:418px;top:393.0px;width:2.6px;height:1px;background:#b4b6c4"></div><div class="a" style="left:418px;top:395.0px;width:2.6px;height:1px;background:#b4b6c4"></div><div class="a" style="left:418px;top:397.0px;width:2.6px;height:1px;background:#b4b6c4"></div><div class="a" style="left:418px;top:399.0px;width:2.6px;height:1px;background:#b4b6c4"></div><div class="a" style="left:418px;top:400.6px;width:2.6px;height:1px;background:#fff"></div>
<div class="grp" style="left:424px;top:81px;width:759px;height:621px;background:#f5f5f7"></div>
<div class="grp" style="left:427px;top:84px;width:753px;height:615px;background:#f1f1f4;box-shadow:none"></div>
<div class="a" style="left:428px;top:85px;width:751px;height:18px;border-radius:2px 2px 0 0;background:linear-gradient(#e6e7eb,#dedfe5)"></div>
<div class="a" style="left:428px;top:103px;width:751px;height:1px;background:#fbfbfc"></div>
<div class="t" style="left:438.2px;top:89.11px;">Included Records</div>
<div class="grid" style="left:432px;top:107px;width:540px;height:584.5px;overflow:hidden">
<div class="hdr" style="left:0;top:0;width:538px;height:19.55px"></div>
<div class="t" style="left:19.2px;top:4.11px;">Record Name</div>
<div class="t" style="left:272.8px;top:4.11px;">Group</div>
<div class="row" style="top:19.55px;width:520.4px;height:18.79px;background:#fff"></div>
<div class="a" style="left:0;top:19.55px;width:15px;height:17.79px;background:#f1f1f4"></div>
<div class="t" style="left:18.9px;top:23.11px;letter-spacing:-.03px">Reserves/M1/P2/P201</div>
<div class="t" style="left:272.6px;top:23.11px;letter-spacing:-.03px">Reserves/M1/P2/P201</div>
<div class="row" style="top:38.34px;width:520.4px;height:18.79px;background:#fff"></div>
<div class="a" style="left:0;top:38.34px;width:15px;height:17.79px;background:#f1f1f4"></div>
<div class="t" style="left:18.9px;top:42.11px;letter-spacing:-.03px">Reserves/M1/P3/P301</div>
<div class="t" style="left:272.6px;top:42.11px;letter-spacing:-.03px">Reserves/M1/P3/P301</div>
<div class="row" style="top:57.13px;width:520.4px;height:18.79px;background:#fff"></div>
<div class="a" style="left:0;top:57.13px;width:15px;height:17.79px;background:#f1f1f4"></div>
<div class="t" style="left:18.9px;top:61.11px;letter-spacing:-.03px">Dumps/Dump1</div>
<div class="t" style="left:272.6px;top:61.11px;letter-spacing:-.03px">Dumps/Dump1</div>
<div class="row" style="top:75.92px;width:520.4px;height:18.79px;background:#fff"></div>
<div class="a" style="left:0;top:75.92px;width:15px;height:17.79px;background:#f1f1f4"></div>
<div class="t" style="left:18.9px;top:80.11px;letter-spacing:-.03px">Dumps/Dump2</div>
<div class="t" style="left:272.6px;top:80.11px;letter-spacing:-.03px">Dumps/Dump2</div>
<div class="row" style="top:94.71px;width:520.4px;height:18.79px;background:#fff"></div>
<div class="a" style="left:0;top:94.71px;width:15px;height:17.79px;background:#f1f1f4"></div>
<div class="t" style="left:18.9px;top:99.11px;letter-spacing:-.03px">Dumps/Dump3</div>
<div class="t" style="left:272.6px;top:99.11px;letter-spacing:-.03px">Dumps/Dump3</div>
<div class="row" style="top:113.50px;width:520.4px;height:18.79px;background:#fff"></div>
<div class="a" style="left:0;top:113.50px;width:15px;height:17.79px;background:#f1f1f4"></div>
<div class="t" style="left:18.9px;top:117.11px;letter-spacing:-.03px">Dumps/LG1</div>
<div class="t" style="left:272.6px;top:117.11px;letter-spacing:-.03px">Dumps/LG1</div>
<div class="row" style="top:132.29px;width:520.4px;height:18.79px;background:#fff"></div>
<div class="a" style="left:0;top:132.29px;width:15px;height:17.79px;background:#f1f1f4"></div>
<div class="t" style="left:18.9px;top:136.11px;letter-spacing:-.03px">Stockpiles/DeadCoarseOreStockpile</div>
<div class="t" style="left:272.6px;top:136.11px;letter-spacing:-.03px">Stockpiles/DeadCoarseOreStockpile</div>
<div class="row" style="top:151.08px;width:520.4px;height:18.79px;background:#fff"></div>
<div class="a" style="left:0;top:151.08px;width:15px;height:17.79px;background:#f1f1f4"></div>
<div class="t" style="left:18.9px;top:155.11px;letter-spacing:-.03px">Stockpiles/LiveCoarseOreStockpile</div>
<div class="t" style="left:272.6px;top:155.11px;letter-spacing:-.03px">Stockpiles/LiveCoarseOreStockpile</div>
<div class="row" style="top:169.87px;width:520.4px;height:18.79px;background:#fff"></div>
<div class="a" style="left:0;top:169.87px;width:15px;height:17.79px;background:#f1f1f4"></div>
<div class="t" style="left:18.9px;top:174.11px;letter-spacing:-.03px">Stockpiles/LongTerm1</div>
<div class="t" style="left:272.6px;top:174.11px;letter-spacing:-.03px">Stockpiles/LongTerm1</div>
<div class="row" style="top:188.66px;width:520.4px;height:18.79px;background:#fff"></div>
<div class="a" style="left:0;top:188.66px;width:15px;height:17.79px;background:#f1f1f4"></div>
<div class="t" style="left:18.9px;top:193.11px;letter-spacing:-.03px">Stockpiles/LongTerm2</div>
<div class="t" style="left:272.6px;top:193.11px;letter-spacing:-.03px">Stockpiles/LongTerm2</div>
<div class="row" style="top:207.45px;width:520.4px;height:18.79px;background:#fff"></div>
<div class="a" style="left:0;top:207.45px;width:15px;height:17.79px;background:#f1f1f4"></div>
<div class="t" style="left:18.9px;top:211.11px;letter-spacing:-.03px">Stockpiles/MOB1</div>
<div class="t" style="left:272.6px;top:211.11px;letter-spacing:-.03px">Stockpiles/MOB1</div>
<div class="row" style="top:226.24px;width:520.4px;height:18.79px;background:#fff"></div>
<div class="a" style="left:0;top:226.24px;width:15px;height:17.79px;background:#f1f1f4"></div>
<div class="t" style="left:18.9px;top:230.11px;letter-spacing:-.03px">Stockpiles/MOB2</div>
<div class="t" style="left:272.6px;top:230.11px;letter-spacing:-.03px">Stockpiles/MOB2</div>
<div class="row" style="top:245.03px;width:520.4px;height:18.79px;background:#fff"></div>
<div class="a" style="left:0;top:245.03px;width:15px;height:17.79px;background:#f1f1f4"></div>
<div class="t" style="left:18.9px;top:249.11px;letter-spacing:-.03px">Stockpiles/MOB3</div>
<div class="t" style="left:272.6px;top:249.11px;letter-spacing:-.03px">Stockpiles/MOB3</div>
<div class="row" style="top:263.82px;width:520.4px;height:18.79px;background:#fff"></div>
<div class="a" style="left:0;top:263.82px;width:15px;height:17.79px;background:#f1f1f4"></div>
<div class="t" style="left:18.9px;top:268.11px;letter-spacing:-.03px">Stockpiles/MOB4</div>
<div class="t" style="left:272.6px;top:268.11px;letter-spacing:-.03px">Stockpiles/MOB4</div>
<div class="row" style="top:282.61px;width:520.4px;height:18.79px;background:#fff"></div>
<div class="a" style="left:0;top:282.61px;width:15px;height:17.79px;background:#f1f1f4"></div>
<div class="t" style="left:18.9px;top:286.11px;letter-spacing:-.03px">Stockpiles/MOBFinesProduct</div>
<div class="t" style="left:272.6px;top:286.11px;letter-spacing:-.03px">Stockpiles/MOBFinesProduct</div>
<div class="row" style="top:301.40px;width:520.4px;height:18.79px;background:#fff"></div>
<div class="a" style="left:0;top:301.40px;width:15px;height:17.79px;background:#f1f1f4"></div>
<div class="t" style="left:18.9px;top:305.11px;letter-spacing:-.03px">Stockpiles/MOBLumpProduct</div>
<div class="t" style="left:272.6px;top:305.11px;letter-spacing:-.03px">Stockpiles/MOBLumpProduct</div>
<div class="row" style="top:320.19px;width:520.4px;height:18.79px;background:#fff"></div>
<div class="a" style="left:0;top:320.19px;width:15px;height:17.79px;background:#f1f1f4"></div>
<div class="t" style="left:18.9px;top:324.11px;letter-spacing:-.03px">Stockpiles/ROM1</div>
<div class="t" style="left:272.6px;top:324.11px;letter-spacing:-.03px">Stockpiles/ROM1</div>
<div class="row" style="top:338.98px;width:520.4px;height:18.79px;background:#fff"></div>
<div class="a" style="left:0;top:338.98px;width:15px;height:17.79px;background:#f1f1f4"></div>
<div class="t" style="left:18.9px;top:343.11px;letter-spacing:-.03px">Stockpiles/ROM2</div>
<div class="t" style="left:272.6px;top:343.11px;letter-spacing:-.03px">Stockpiles/ROM2</div>
<div class="row" style="top:357.77px;width:520.4px;height:18.79px;background:#fff"></div>
<div class="a" style="left:0;top:357.77px;width:15px;height:17.79px;background:#f1f1f4"></div>
<div class="t" style="left:18.9px;top:362.11px;letter-spacing:-.03px">Stockpiles/ROM3</div>
<div class="t" style="left:272.6px;top:362.11px;letter-spacing:-.03px">Stockpiles/ROM3</div>
<div class="row" style="top:376.56px;width:520.4px;height:18.79px;background:#fff"></div>
<div class="a" style="left:0;top:376.56px;width:15px;height:17.79px;background:#f1f1f4"></div>
<div class="t" style="left:18.9px;top:380.11px;letter-spacing:-.03px">Stockpiles/ROM4</div>
<div class="t" style="left:272.6px;top:380.11px;letter-spacing:-.03px">Stockpiles/ROM4</div>
<div class="row" style="top:395.35px;width:520.4px;height:18.79px;background:#fff"></div>
<div class="a" style="left:0;top:395.35px;width:15px;height:17.79px;background:#f1f1f4"></div>
<div class="t" style="left:18.9px;top:399.11px;letter-spacing:-.03px">Stockpiles/ROM5</div>
<div class="t" style="left:272.6px;top:399.11px;letter-spacing:-.03px">Stockpiles/ROM5</div>
<div class="row" style="top:414.14px;width:520.4px;height:18.79px;background:#fff"></div>
<div class="a" style="left:0;top:414.14px;width:15px;height:17.79px;background:#f1f1f4"></div>
<div class="t" style="left:18.9px;top:418.11px;letter-spacing:-.03px">Stockpiles/ROM6</div>
<div class="t" style="left:272.6px;top:418.11px;letter-spacing:-.03px">Stockpiles/ROM6</div>
<div class="row" style="top:432.93px;width:520.4px;height:18.79px;background:#fff"></div>
<div class="a" style="left:0;top:432.93px;width:15px;height:17.79px;background:#f1f1f4"></div>
<div class="t" style="left:18.9px;top:437.11px;letter-spacing:-.03px">Stockpiles/ROM7</div>
<div class="t" style="left:272.6px;top:437.11px;letter-spacing:-.03px">Stockpiles/ROM7</div>
<div class="row" style="top:451.72px;width:520.4px;height:18.79px;background:#e3e9fb"></div>
<div class="a" style="left:0;top:451.72px;width:15px;height:17.79px;background:#f1f1f4"></div>
<div class="t" style="left:18.9px;top:456.11px;letter-spacing:-.03px">Stockpiles/StockyardFinesRegular</div>
<div class="t" style="left:272.6px;top:456.11px;letter-spacing:-.03px">Stockpiles/StockyardFinesRegular</div>
<div class="row" style="top:470.51px;width:520.4px;height:18.79px;background:#e3e9fb"></div>
<div class="a" style="left:0;top:470.51px;width:15px;height:17.79px;background:#f1f1f4"></div>
<div class="t" style="left:18.9px;top:474.11px;letter-spacing:-.03px">Stockpiles/StockyardFinesSpecial</div>
<div class="t" style="left:272.6px;top:474.11px;letter-spacing:-.03px">Stockpiles/StockyardFinesSpecial</div>
<div class="row" style="top:489.30px;width:520.4px;height:18.79px;background:#e3e9fb"></div>
<div class="a" style="left:0;top:489.30px;width:15px;height:17.79px;background:#f1f1f4"></div>
<div class="t" style="left:18.9px;top:493.11px;letter-spacing:-.03px">Stockpiles/StockyardLumpRegular</div>
<div class="t" style="left:272.6px;top:493.11px;letter-spacing:-.03px">Stockpiles/StockyardLumpRegular</div>
<div class="row" style="top:508.09px;width:520.4px;height:18.79px;background:#e3e9fb"></div>
<div class="a" style="left:0;top:508.09px;width:15px;height:17.79px;background:#f1f1f4"></div>
<div class="a" style="left:15.5px;top:508.09px;width:253px;height:17.8px;background:#fff;border:1px dotted #30324a"></div>
<svg style="left:5.6px;top:512.69px" width="5" height="9"><path d="M0 0L4 4L0 8Z" fill="#1c1d2c"/></svg>
<div class="t" style="left:18.9px;top:512.11px;letter-spacing:-.03px">Stockpiles/StockyardLumpSpecial</div>
<div class="t" style="left:272.6px;top:512.11px;letter-spacing:-.03px">Stockpiles/StockyardLumpSpecial</div>
<div class="row" style="top:526.88px;width:520.4px;height:18.79px;background:#fff"></div>
<div class="a" style="left:0;top:526.88px;width:15px;height:17.79px;background:#f1f1f4"></div>
<div class="t" style="left:18.9px;top:531.11px;letter-spacing:-.03px">Crushers/PrimaryCrusher1</div>
<div class="t" style="left:272.6px;top:531.11px;letter-spacing:-.03px">Crushers/PrimaryCrusher1</div>
<div class="row" style="top:545.67px;width:520.4px;height:18.79px;background:#fff"></div>
<div class="a" style="left:0;top:545.67px;width:15px;height:17.79px;background:#f1f1f4"></div>
<div class="t" style="left:18.9px;top:550.11px;letter-spacing:-.03px">Crushers/MobileCrusher1</div>
<div class="t" style="left:272.6px;top:550.11px;letter-spacing:-.03px">Crushers/MobileCrusher1</div>
<div class="row" style="top:564.46px;width:520.4px;height:18.79px;background:#fff"></div>
<div class="a" style="left:0;top:564.46px;width:15px;height:17.79px;background:#f1f1f4"></div>
<div class="t" style="left:18.9px;top:568.11px;letter-spacing:-.03px">Crushers/WetPlant</div>
<div class="t" style="left:272.6px;top:568.11px;letter-spacing:-.03px">Crushers/WetPlant</div>
<div class="a" style="left:15px;top:0;width:1px;height:584px;background:#d9dae1"></div>
<div class="a" style="left:15px;top:0;width:1px;height:18.5px;background:#cdcfd8"></div>
<div class="a" style="left:268.3px;top:0;width:1px;height:584px;background:#d9dae1"></div>
<div class="a" style="left:268.3px;top:0;width:1px;height:18.5px;background:#cdcfd8"></div>
<div class="a" style="left:520.4px;top:0;width:1px;height:584px;background:#d9dae1"></div>
<div class="a" style="left:520.4px;top:0;width:1px;height:18.5px;background:#cdcfd8"></div>
<div class="a" style="left:521.4px;top:20.5px;width:17px;height:563px;background:#f4f4f7"></div>
<div class="a" style="left:521.4px;top:0;width:17px;height:18.5px;background:#f7f7f9"></div>
<svg style="left:526.6px;top:25.8px" width="8" height="5"><path d="M0 3.6H6.4L3.2 0Z" fill="#70738a"/></svg>
<svg style="left:526.6px;top:573.1px" width="8" height="5"><path d="M0 0H6.4L3.2 3.6Z" fill="#70738a"/></svg>
<div class="a" style="left:525.7px;top:70.3px;width:7.2px;height:496.5px;border:1px solid #a3a6b8;border-radius:3.6px;background:linear-gradient(90deg,#e6e7eb,#d9dae0);box-shadow:0 0 0 1px rgba(255,255,255,.7)"></div>
</div>
<div class="a" style="left:975.5px;top:393.0px;width:2.6px;height:1px;background:#b4b6c4"></div><div class="a" style="left:975.5px;top:395.0px;width:2.6px;height:1px;background:#b4b6c4"></div><div class="a" style="left:975.5px;top:397.0px;width:2.6px;height:1px;background:#b4b6c4"></div><div class="a" style="left:975.5px;top:399.0px;width:2.6px;height:1px;background:#b4b6c4"></div><div class="a" style="left:975.5px;top:401.0px;width:2.6px;height:1px;background:#b4b6c4"></div><div class="a" style="left:975.5px;top:403.0px;width:2.6px;height:1px;background:#b4b6c4"></div><div class="a" style="left:975.5px;top:405.0px;width:2.6px;height:1px;background:#b4b6c4"></div><div class="a" style="left:975.5px;top:406.6px;width:2.6px;height:1px;background:#fff"></div>
<div class="grp" style="left:981.5px;top:107.5px;width:193.5px;height:586px;background:#f1f1f4"></div>
<div class="grid" style="left:985px;top:110px;width:188px;height:582px;overflow:hidden">
<div class="a" style="left:0;top:0;width:93px;height:33.5px;background:#f8f8fa"></div>
<div class="a" style="left:0;top:16.6px;width:186px;height:1px;background:#e2e3e8"></div>
<div class="a" style="left:0;top:33.2px;width:186px;height:1px;background:#e2e3e8"></div>
<div class="a" style="left:92.8px;top:0;width:1px;height:34px;background:#e2e3e8"></div>
<div class="t" style="left:18.7px;top:4.11px;color:#8a8d9f">Record Name</div>
<div class="t" style="left:97.2px;top:4.11px;color:#8a8d9f">(multiple values)</div>
<div class="t" style="left:18.7px;top:20.11px;">Group</div>
<div class="t" style="left:97.2px;top:20.11px;">(multiple values)</div>
</div>
</body></html>
